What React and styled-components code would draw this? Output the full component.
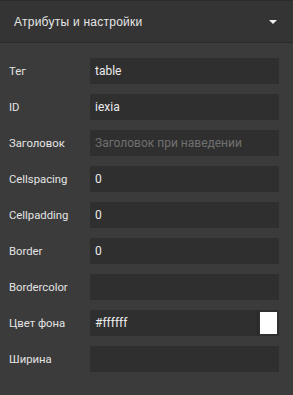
import React from 'react';
import styled, { createGlobalStyle } from 'styled-components';

const Global = createGlobalStyle`
    html, body {
        margin: 0;
        padding: 0;
        background: #3b3b3b;
    }
`;

const Panel = styled.div`
    width: 293px;
    height: 395px;
    background: #3b3b3b;
    font-family: Roboto, "Liberation Sans", sans-serif;
    overflow: hidden;
`;

const Header = styled.div`
    display: flex;
    align-items: center;
    justify-content: space-between;
    height: 41px;
    padding: 1px 16px 0 14px;
    box-sizing: border-box;
    height: 43px;
    background: #343434;
    border-top: 1px solid #2c2c2c;
    border-bottom: 1px solid #2a2a2a;

    color: #e6e6e6;
    font-family: "Liberation Sans", Arial, sans-serif;
    font-size: 12px;
    letter-spacing: 0.25px;
`;

const Caret = styled.span`
    width: 0;
    height: 0;
    border-left: 4px solid transparent;
    border-right: 4px solid transparent;
    border-top: 4px solid #f2f2f2;
`;

const Body = styled.div`
    display: flex;
    flex-direction: column;
    gap: 10px;
    padding: 15px 14px 0 9px;
`;

const Row = styled.div`
    display: flex;
    align-items: center;
    height: 26px;
`;

const Label = styled.label`
    width: 81px;
    color: #e4e4e4;
    font-size: 11.3px;
`;

const Field = styled.div`
    flex: 1;
    display: flex;
    height: 26px;
    background: #2f2f2f;
`;

const Input = styled.input`
    flex: 1;
    min-width: 0;
    border: none;
    outline: none;
    background: transparent;
    padding: 0 5px;
    color: #ececec;
    font-family: Roboto, "Liberation Sans", sans-serif;
    font-size: 12px;

    &::placeholder {
        color: #6f6f6f;
    }
`;

const Swatch = styled.div`
    width: 21px;
    border-left: 1px solid #262626;
    display: flex;
    align-items: center;
    justify-content: center;

    &::after {
        content: '';
        width: 17px;
        height: 22px;
        background: ${props => props.color};
    }
`;

const fields = [
    { label: 'Тег', value: 'table' },
    { label: 'ID', value: 'iexia' },
    { label: 'Заголовок', value: '', placeholder: 'Заголовок при наведении' },
    { label: 'Cellspacing', value: '0' },
    { label: 'Cellpadding', value: '0' },
    { label: 'Border', value: '0' },
    { label: 'Bordercolor', value: '' },
    { label: 'Цвет фона', value: '#ffffff', swatch: '#ffffff' },
    { label: 'Ширина', value: '' },
];

export default function App() {
    return (
        <Panel>
            <Global />
            <Header>
                Атрибуты и настройки
                <Caret />
            </Header>
            <Body>
                {fields.map(f => (
                    <Row key={f.label}>
                        <Label>{f.label}</Label>
                        <Field>
                            <Input defaultValue={f.value} placeholder={f.placeholder} />
                            {f.swatch && <Swatch color={f.swatch} />}
                        </Field>
                    </Row>
                ))}
            </Body>
        </Panel>
    );
}
